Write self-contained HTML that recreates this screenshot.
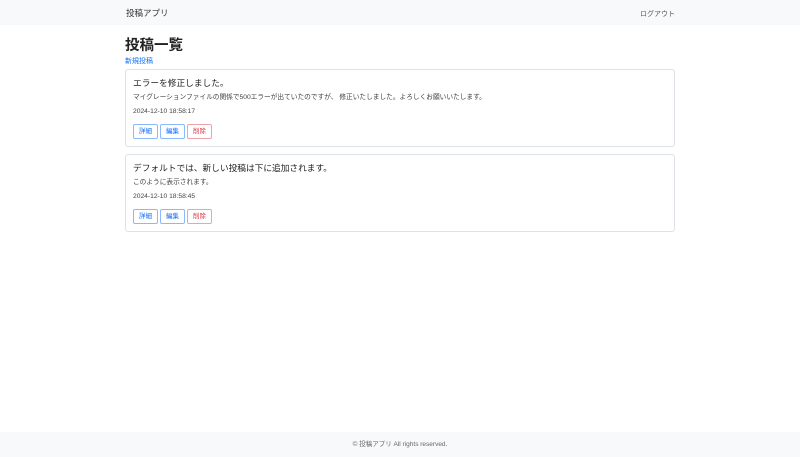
<!DOCTYPE html>
<html><head><meta charset="utf-8"><style>
*{box-sizing:border-box;margin:0;padding:0}
body{width:800px;height:457px;position:relative;background:#fff;font-family:"Liberation Sans","Noto Sans CJK JP",sans-serif;color:#212529;overflow:hidden}
.nav{position:absolute;left:0;top:0;width:800px;height:25px;background:#f8f9fa}
.brand{position:absolute;left:126px;top:7px;font-size:8.5px;color:#333}
.logout{position:absolute;right:125px;top:9px;font-size:7px;color:#555}
h1{position:absolute;left:125px;top:34px;font-size:14.5px;font-weight:bold;color:#222}
.new{position:absolute;left:125px;top:56px;font-size:7px;color:#0d6efd}
.card{position:absolute;left:125px;width:550px;border:1px solid #dee2e6;border-radius:3px}
.t{position:absolute;left:7px;font-size:8.7px;color:#222}
.b{position:absolute;left:7px;font-size:6.7px;color:#444}
.d{position:absolute;left:7px;font-size:6.7px;color:#444}
.btns{position:absolute;left:7px;display:flex;gap:2px}
.btn{height:15px;width:25px;border:1px solid #8bb9fe;border-radius:2px;color:#0d6efd;font-size:6.5px;line-height:13px;text-align:center}
.btn.r{border-color:#eda3aa;color:#dc3545}
.foot{position:absolute;left:0;top:432px;width:800px;height:25px;background:#f8f9fa;font-size:6.5px;color:#666;text-align:center;line-height:25px}
</style></head><body>
<div class="nav"><div class="brand">投稿アプリ</div><div class="logout">ログアウト</div></div>
<h1>投稿一覧</h1>
<div class="new">新規投稿</div>
<div class="card" style="top:69px;height:78px">
<div class="t" style="top:6px">エラーを修正しました。</div>
<div class="b" style="top:21px">マイグレーションファイルの関係で500エラーが出ていたのですが、 修正いたしました。よろしくお願いいたします。</div>
<div class="d" style="top:38px">2024-12-10 18:58:17</div>
<div class="btns" style="top:54px"><div class="btn">詳細</div><div class="btn">編集</div><div class="btn r">削除</div></div>
</div>
<div class="card" style="top:154px;height:78px">
<div class="t" style="top:6px">デフォルトでは、新しい投稿は下に追加されます。</div>
<div class="b" style="top:21px">このように表示されます。</div>
<div class="d" style="top:38px">2024-12-10 18:58:45</div>
<div class="btns" style="top:54px"><div class="btn">詳細</div><div class="btn">編集</div><div class="btn r">削除</div></div>
</div>
<div class="foot">© 投稿アプリ All rights reserved.</div>
</body></html>
